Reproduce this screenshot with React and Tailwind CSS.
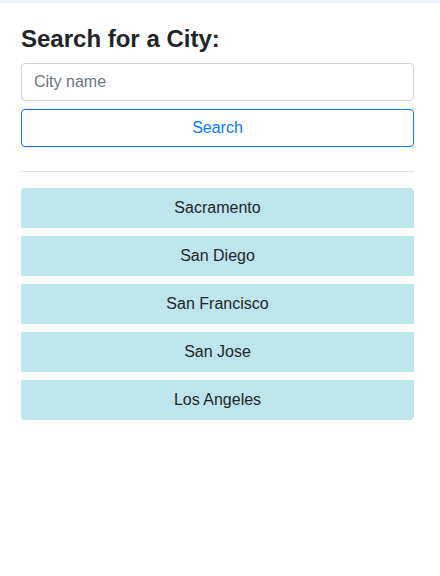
const CITIES = ['Sacramento', 'San Diego', 'San Francisco', 'San Jose', 'Los Angeles'];

export default function App() {
  return (
    <div className="min-h-[576px] bg-white font-['Liberation_Sans',Arial,sans-serif] text-[#212529]">
      <div className="h-[3px] bg-[#eef3f7]" />

      <div className="ml-[21px] w-[393px] pt-[22px]">
        <h4 className="text-[24px] font-bold leading-[1.2] mb-[9px]">Search for a City:</h4>

        <input
          type="text"
          placeholder="City name"
          className="block w-full h-[38px] px-3 text-base border border-[#ced4da] rounded-[4px] placeholder:text-[#6c757d] outline-none"
        />
        <button className="mt-2 block w-full h-[38px] text-base text-[#007bff] border border-[#007bff] rounded-[4px] bg-white">
          Search
        </button>

        <hr className="mt-6 mb-4 border-0 border-t border-[#e5e5e5]" />

        <ul className="flex flex-col gap-2">
          {CITIES.map((city) => (
            <li
              key={city}
              className="h-10 flex items-center justify-center bg-[#bee5eb] text-base first:rounded-t-[4px] last:rounded-b-[4px]"
            >
              {city}
            </li>
          ))}
        </ul>
      </div>
    </div>
  );
}
